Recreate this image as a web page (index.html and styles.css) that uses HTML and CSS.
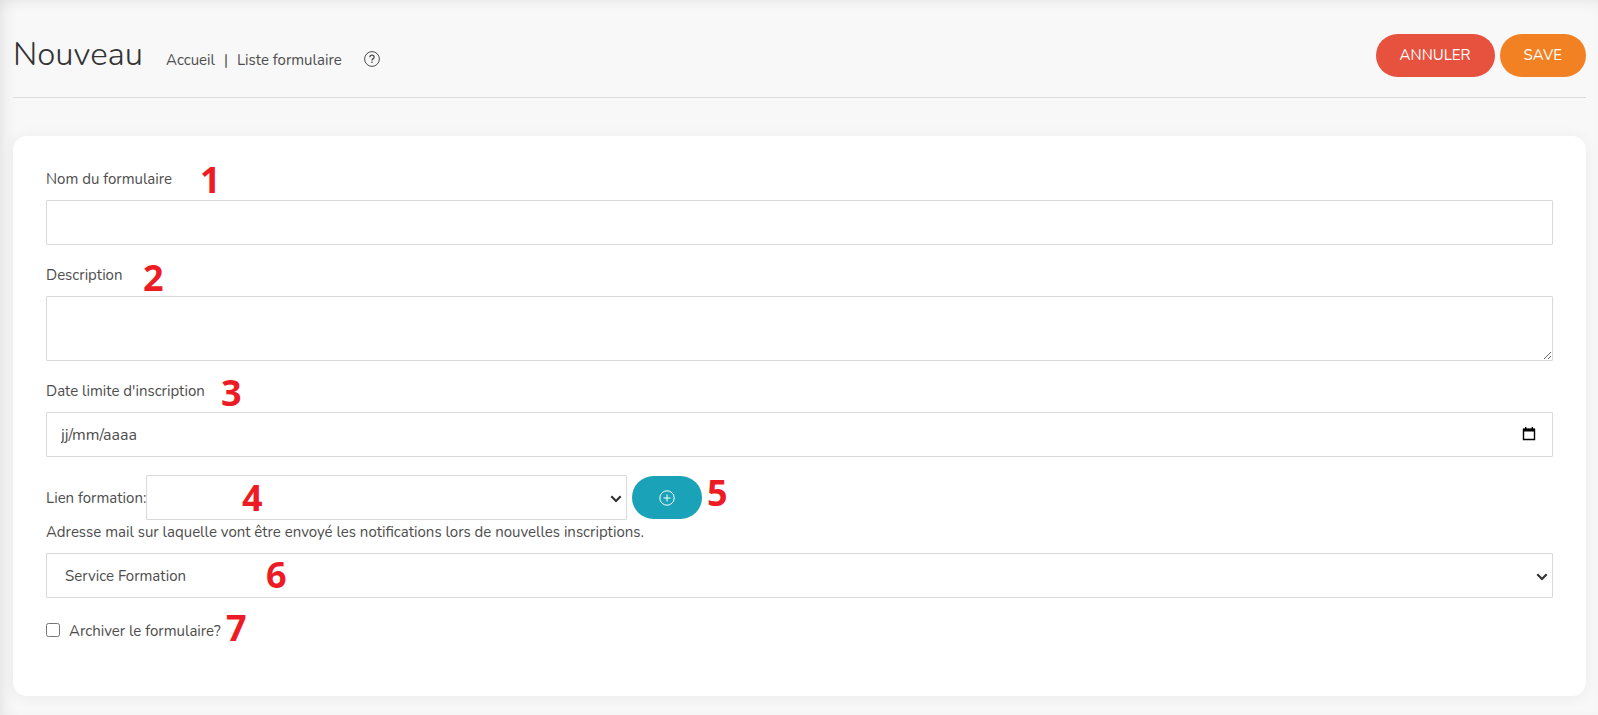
FILE: index.html
```html
<!DOCTYPE html>
<html lang="fr">
<head>
    <meta charset="UTF-8">
    <meta name="viewport" content="width=device-width, initial-scale=1.0">
    <title>Nouveau formulaire</title>
    <link rel="stylesheet" href="styles.css">
</head>
<body>
    <main>
        <header class="page-header">
            <h1>Nouveau</h1>
            <nav class="breadcrumb">
                <a href="#">Accueil</a>
                <span class="separator">|</span>
                <a href="#">Liste formulaire</a>
            </nav>
            <a href="#" class="help" aria-label="Aide">
                <svg width="16" height="16" viewBox="0 0 16 16" fill="none" stroke="currentColor">
                    <circle cx="8" cy="8" r="7.4"/>
                    <path d="M5.9 6.3C5.9 4.9 6.8 4.2 8 4.2S10.1 5 10.1 6.2C10.1 7.6 8 7.7 8 9.4" stroke-width="1.3"/>
                    <path d="M8 10.6V12" stroke-width="1.3"/>
                </svg>
            </a>
            <div class="actions">
                <button type="button" class="btn btn-danger">ANNULER</button>
                <button type="submit" form="formulaire" class="btn btn-primary">SAVE</button>
            </div>
        </header>

        <form id="formulaire" class="card">
            <div class="form-group">
                <label for="nom">Nom du formulaire</label>
                <input type="text" id="nom" class="form-control">
            </div>
            <div class="form-group">
                <label for="description">Description</label>
                <textarea id="description" class="form-control"></textarea>
            </div>
            <div class="form-group">
                <label for="date">Date limite d'inscription</label>
                <div class="date-field">
                    <input type="text" id="date" class="form-control" placeholder="jj/mm/aaaa">
                    <button type="button" class="date-picker" aria-label="Calendrier">
                        <svg width="14" height="14" viewBox="0 0 14 14">
                            <path d="M1.5 2.5h11v10h-11z" fill="none" stroke="#000" stroke-width="1.4"/>
                            <path d="M1 1.5h12v3H1zM3 0h1.4v2H3zM9.6 0H11v2H9.6z" fill="#000"/>
                        </svg>
                    </button>
                </div>
            </div>
            <div class="form-row">
                <label for="formation">Lien formation:</label>
                <div class="select formation">
                    <select id="formation" class="form-control">
                        <option></option>
                    </select>
                    <svg class="chevron" width="12" height="8" viewBox="0 0 12 8"><path d="M1.3 1.3L6 6l4.7-4.7"/></svg>
                </div>
                <button type="button" class="btn btn-info" aria-label="Ajouter une formation">
                    <svg width="16" height="16" viewBox="0 0 16 16" fill="none" stroke="currentColor">
                        <circle cx="8" cy="8" r="7.2"/>
                        <path d="M8 4.5v7M4.5 8h7"/>
                    </svg>
                </button>
            </div>
            <div class="form-group">
                <label for="mail">Adresse mail sur laquelle vont être envoyé les notifications lors de nouvelles inscriptions.</label>
                <div class="select">
                    <select id="mail" class="form-control">
                        <option>Service Formation</option>
                    </select>
                    <svg class="chevron" width="12" height="8" viewBox="0 0 12 8"><path d="M1.3 1.3L6 6l4.7-4.7"/></svg>
                </div>
            </div>
            <div class="form-check">
                <input type="checkbox" id="archive">
                <label for="archive">Archiver le formulaire?</label>
            </div>

            <span class="mark mark-1">1</span>
            <span class="mark mark-2">2</span>
            <span class="mark mark-3">3</span>
            <span class="mark mark-4">4</span>
            <span class="mark mark-5">5</span>
            <span class="mark mark-6">6</span>
            <span class="mark mark-7">7</span>
        </form>
    </main>
</body>
</html>
```
FILE: styles.css
```css
* {
    box-sizing: border-box;
}
body {
    margin: 0;
    min-height: 100vh;
    background: #f8f8f8;
    box-shadow: inset 12px 0 16px -8px rgba(0,0,0,0.07), inset 0 8px 16px -8px rgba(0,0,0,0.08);
    color: #4d4d4d;
    font-family: Nunito, Lato, sans-serif;
    font-size: 15px;
    line-height: 24px;
}
main {
    padding: 33px 12px 18px 13px;
}
.page-header {
    display: flex;
    align-items: center;
    height: 65px;
    padding-bottom: 20px;
    border-bottom: 1px solid #dcdcdc;
    margin-bottom: 38px;
}
h1 {
    margin: 0 23px 0 0;
    font-size: 33px;
    font-weight: 300;
    line-height: 40px;
    color: #333;
}
.breadcrumb {
    display: flex;
    gap: 9px;
    padding-top: 10px;
}
a {
    color: inherit;
    text-decoration: none;
}
.help {
    display: flex;
    margin-left: 22px;
    padding-top: 8px;
}
.actions {
    display: flex;
    gap: 5px;
    margin-left: auto;
}
.btn {
    height: 43px;
    padding: 0 24px;
    border: none;
    border-radius: 22px;
    color: white;
    font-family: inherit;
    font-size: 15px;
    cursor: pointer;
}
.btn svg {
    display: block;
}
.btn-danger {
    background: #e7523e;
}
.btn-primary {
    background: #f28123;
}
.btn-info {
    padding: 0 27px;
    margin-left: 5px;
    background: #19a2b8;
}
.card {
    position: relative;
    padding: 31px 33px 53px;
    background: white;
    border-radius: 14px;
    box-shadow: 0 1px 15px rgba(0,0,0,0.06);
}
.form-group {
    margin-bottom: 18px;
}
.form-group > label {
    display: block;
    margin-bottom: 9px;
}
.form-control {
    display: block;
    width: 100%;
    height: 45px;
    padding: 0 14px;
    border: 1px solid #d9d9d9;
    border-radius: 1px;
    background: white;
    color: inherit;
    font: inherit;
}
textarea.form-control {
    height: 65px;
    padding: 10px 14px;
    resize: vertical;
}
.date-field,
.select {
    position: relative;
}
.date-field .form-control {
    font-size: 16px;
}
.date-field .form-control::placeholder {
    color: #4d4d4d;
}
.date-picker {
    position: absolute;
    top: 15px;
    right: 17px;
    padding: 0;
    border: none;
    background: none;
}
.date-picker svg {
    display: block;
}
select.form-control {
    appearance: none;
    padding: 0 18px;
}
.chevron {
    position: absolute;
    top: 20px;
    right: 5px;
    fill: none;
    stroke: #333;
    stroke-width: 2.2;
    pointer-events: none;
}
.form-row {
    display: flex;
    align-items: center;
}
.formation {
    width: 481px;
}
.form-check {
    display: flex;
    align-items: center;
    gap: 9px;
}
.form-check input {
    width: 14px;
    height: 14px;
    margin: 0;
}
.form-check label {
    padding-top: 3px;
}
.mark {
    position: absolute;
    color: #ed1c24;
    font-family: "Segoe UI", "Open Sans", sans-serif;
    font-size: 36px;
    font-weight: 700;
    line-height: 36px;
}
.mark-1 { top: 26px; left: 187px; }
.mark-2 { top: 124px; left: 130px; }
.mark-3 { top: 239px; left: 208px; }
.mark-4 { top: 344px; left: 229px; }
.mark-5 { top: 339px; left: 694px; }
.mark-6 { top: 421px; left: 253px; }
.mark-7 { top: 474px; left: 213px; }
```
